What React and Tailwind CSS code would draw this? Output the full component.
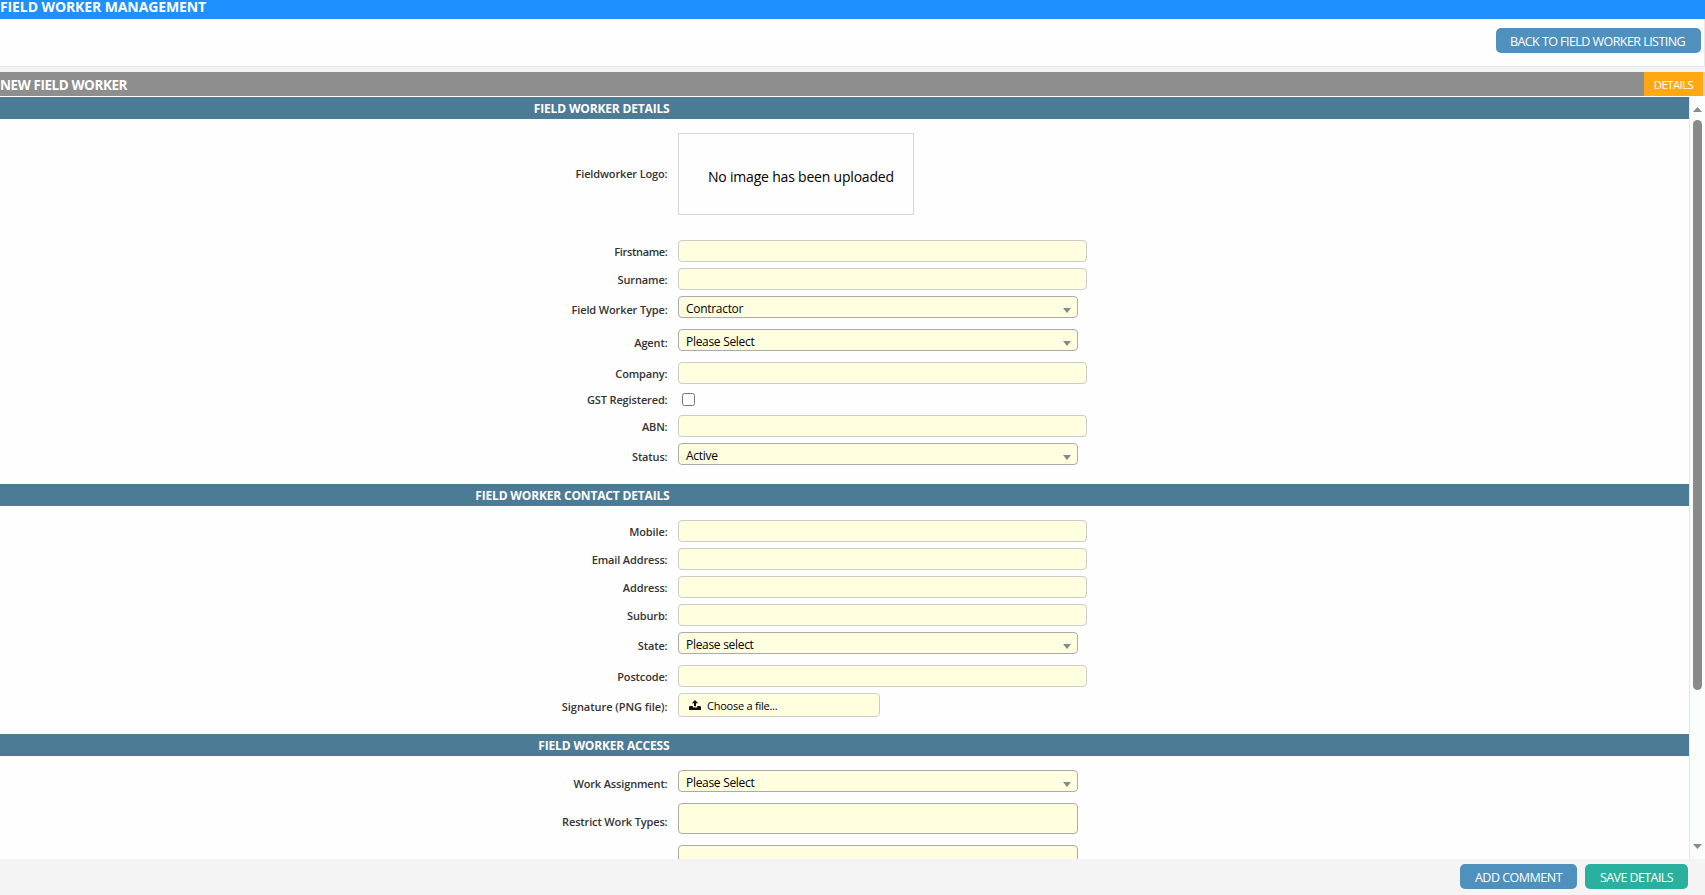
import clsx from "clsx";

function Label({ children, className }) {
  return (
    <div
      className={clsx(
        "w-[667.5px] shrink-0 pt-[1px] text-right text-[11px] leading-4 font-semibold whitespace-nowrap text-[#333]",
        className ?? "tracking-[-0.14px]",
      )}
    >
      {children}
    </div>
  );
}

function Row({ label, height = "h-7", labelClass, children }) {
  return (
    <div className={clsx("flex shrink-0 items-center gap-[10.5px]", height)}>
      <Label className={labelClass}>{label}</Label>
      {children}
    </div>
  );
}

function InputRow({ label, labelClass }) {
  return (
    <Row label={label} labelClass={labelClass}>
      <input
        type="text"
        className="h-[22px] w-[409px] rounded-[4px] border border-[#ccc] bg-[#ffffe0] px-2 text-xs outline-none"
      />
    </Row>
  );
}

function SelectRow({ label, value }) {
  return (
    <Row label={label} height="h-[33px]">
      <div className="mb-[5px] flex h-[22px] w-[400px] items-center justify-between rounded-[4px] border border-[#aaa] bg-[#ffffe0] pt-[3px] pr-[6px] pl-[7px] text-xs leading-4 tracking-[-0.3px] text-black">
        {value}
        <svg width="8" height="5" viewBox="0 0 8 5" className="mt-[3px]">
          <path d="M0 0h8L4 5z" fill="#888" />
        </svg>
      </div>
    </Row>
  );
}

function Section({ title, className, children }) {
  return (
    <section className={clsx("flex shrink-0 flex-col", className)}>
      <h2 className="h-[22px] w-full bg-[#4b7b95]">
        <div className="w-[669.5px] pt-[2px] text-right text-[12px] leading-5 font-bold tracking-[-0.17px] text-white">
          {title}
        </div>
      </h2>
      {children}
    </section>
  );
}

function Button({ className, children }) {
  return (
    <button
      className={clsx(
        "h-[25px] rounded-[5px] pt-[2px] text-center text-[12.5px] leading-5 whitespace-nowrap text-white",
        className,
      )}
    >
      {children}
    </button>
  );
}

function UploadIcon() {
  return (
    <svg width="12" height="10" viewBox="0 0 12 10" fill="#111">
      <path d="M6 0 9.2 3.3H7V6.3H5V3.3H2.8z" />
      <path d="M0 7.2Q0 6 1.2 6H3.8V7.6H8.2V6H10.8Q12 6 12 7.2V10H0z" />
    </svg>
  );
}

function Scrollbar() {
  return (
    <div className="flex w-4 shrink-0 flex-col items-center border-l border-[#e4e8e8] bg-[#fbfcfc] pt-[10px] pr-[3px] pb-[10px] pl-[3px]">
      <svg width="9" height="5" viewBox="0 0 9 5" className="shrink-0">
        <path d="M4.5 0 9 5H0z" fill="#8a8a8a" />
      </svg>
      <div className="mt-2 h-[570px] w-[9px] rounded-full bg-[#8a8a8a]" />
      <svg width="9" height="5" viewBox="0 0 9 5" className="mt-auto shrink-0">
        <path d="M0 0h9L4.5 5z" fill="#8a8a8a" />
      </svg>
    </div>
  );
}

export default function App() {
  return (
    <div className="flex h-[895px] w-[1705px] flex-col overflow-hidden bg-[#f4f4f4] font-['Open_Sans','Noto_Sans',sans-serif]">
      <h1 className="h-[19px] shrink-0 bg-[#1e90ff] text-[14px] leading-[14px] font-bold tracking-[-0.1px] text-white">
        FIELD WORKER MANAGEMENT
      </h1>
      <div className="flex h-12 shrink-0 justify-end border-r border-b border-[#e8e8e8] bg-[#fefefe] pt-[9px] pr-[3px]">
        <Button className="w-[205px] bg-[#4f91bc] pr-[2px] tracking-[-0.55px]">BACK TO FIELD WORKER LISTING</Button>
      </div>

      <div className="mt-[5px] flex h-[25px] shrink-0 justify-between border-b border-white bg-[#8e8e8e]">
        <div className="pt-[2px] text-[13.5px] leading-[22px] font-bold tracking-[-0.42px] text-white">
          NEW FIELD WORKER
        </div>
        <div className="flex w-[61px] border-r-2 border-[#d0d0d0] bg-[#ffa912]">
          <div className="w-full pt-[2px] text-center text-[11.5px] leading-[22px] tracking-[-0.65px] text-white">
            DETAILS
          </div>
        </div>
      </div>

      <div className="flex h-[762px] shrink-0 overflow-hidden bg-[#fefefe]">
        <div className="flex grow flex-col overflow-hidden">
          <Section title="FIELD WORKER DETAILS" className="h-[387px]">
            <Row label="Fieldworker Logo:" height="h-[110px]" labelClass="mb-[2px] tracking-[-0.14px]">
              <div className="h-[82px] w-[236px] border border-[#d8d8d8] bg-[#fefefe] pt-[31px] pl-[29px] text-[14px] leading-6 tracking-[-0.2px] whitespace-nowrap text-black">
                No image has been uploaded
              </div>
            </Row>
            <div className="h-2 shrink-0" />
            <InputRow label="Firstname:" labelClass="tracking-[-0.34px]" />
            <InputRow label="Surname:" />
            <SelectRow label="Field Worker Type:" value="Contractor" />
            <SelectRow label="Agent:" value="Please Select" />
            <InputRow label="Company:" />
            <Row label="GST Registered:" height="h-[25px]">
              <input
                type="checkbox"
                className="ml-1 h-[13px] w-[13px] appearance-none rounded-[2.5px] border border-[#767676] bg-white"
              />
            </Row>
            <InputRow label="ABN:" />
            <SelectRow label="Status:" value="Active" />
          </Section>

          <Section title="FIELD WORKER CONTACT DETAILS" className="h-[250px]">
            <div className="h-[11px] shrink-0" />
            <InputRow label="Mobile:" />
            <InputRow label="Email Address:" />
            <InputRow label="Address:" />
            <InputRow label="Suburb:" />
            <SelectRow label="State:" value="Please select" />
            <InputRow label="Postcode:" />
            <Row label="Signature (PNG file):" height="h-[32px]" labelClass="tracking-[-0.04px]">
              <div className="mb-[2px] flex h-6 w-[202px] items-center rounded-[4px] border border-[#ccc] bg-[#ffffe0] pl-[10px] text-[11px] tracking-[-0.24px] text-black">
                <UploadIcon />
                <span className="pt-[2px] pl-[6px]">Choose a file...</span>
              </div>
            </Row>
          </Section>

          <Section title="FIELD WORKER ACCESS">
            <div className="h-[11px] shrink-0" />
            <SelectRow label="Work Assignment:" value="Please Select" />
            <Row label="Restrict Work Types:" height="h-[42px]">
              <div className="mb-[5px] h-[31px] w-[400px] rounded-[4px] border border-[#aaa] bg-[#ffffe0]" />
            </Row>
            <Row label="" height="h-[42px]">
              <div className="mb-[5px] h-[31px] w-[400px] rounded-[4px] border border-[#aaa] bg-[#ffffe0]" />
            </Row>
          </Section>
        </div>
        <Scrollbar />
      </div>

      <div className="flex h-9 shrink-0 justify-end gap-2 bg-[#f4f4f4] pt-[5px] pr-[17px]">
        <Button className="w-[117px] bg-[#4f91bc] tracking-[-0.5px]">ADD COMMENT</Button>
        <Button className="w-[103px] bg-[#2ab09e] tracking-[-0.58px]">SAVE DETAILS</Button>
      </div>
    </div>
  );
}
